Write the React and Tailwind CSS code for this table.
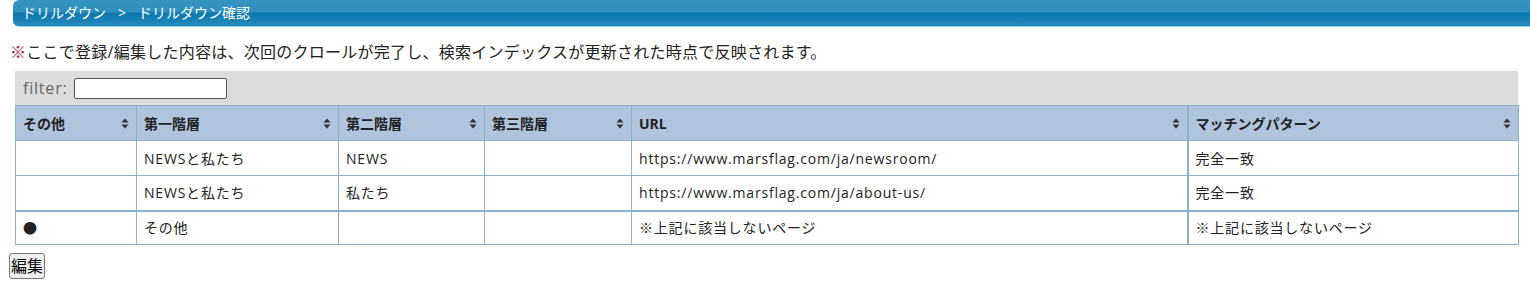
import React from 'react';

const cols = [
    { label: 'その他', w: 'w-[121px]' },
    { label: '第一階層', w: 'w-[202px]' },
    { label: '第二階層', w: 'w-[146px]' },
    { label: '第三階層', w: 'w-[147px]' },
    { label: 'URL', w: 'w-[556px]' },
    { label: 'マッチングパターン', w: 'w-[331px]' },
];

const rows = [
    ['', 'NEWSと私たち', 'NEWS', '', 'https://www.marsflag.com/ja/newsroom/', '完全一致'],
    ['', 'NEWSと私たち', '私たち', '', 'https://www.marsflag.com/ja/about-us/', '完全一致'],
];

const SortIcon = () => (
    <svg className="w-[8px] h-[11px] text-[#333]" viewBox="0 0 8 11" fill="currentColor">
        <path d="M4 0.5L7.5 4.5H0.5Z" />
        <path d="M4 10.5L7.5 6.5H0.5Z" />
    </svg>
);

const App = () => {
    return (
        <div className="w-[1530px] h-[292px] bg-white text-[#222] font-['Open_Sans','Noto_Sans_CJK_JP',sans-serif]">
            {/* Breadcrumb bar */}
            <div className="ml-[13px] h-[27px] rounded-l-[6px] border-b border-[#86d4f2] bg-[linear-gradient(to_bottom,#3594c2_0%,#2f8fbe_46%,#0a78ad_50%,#1b82b6_80%,#2a8dbf_100%)] text-white text-[14px] leading-[25px] pl-[9px] flex gap-[12px]">
                <span>ドリルダウン</span>
                <span>&gt;</span>
                <span>ドリルダウン確認</span>
            </div>

            {/* Notice */}
            <p className="mt-[14px] ml-[10px] text-[16px] leading-[22px] tracking-[0.25px]">
                <span className="text-[#a8123a]">※</span>ここで登録/編集した内容は、次回のクロールが完了し、検索インデックスが更新された時点で反映されます。
            </p>

            <div className="ml-[15px] mt-[8px] w-[1503px]">
                {/* Filter */}
                <div className="h-[34px] bg-[#dcdcdc] flex items-center pl-[8px] gap-[6px]">
                    <span className="text-[16px] text-[#666] tracking-[0.8px]">filter:</span>
                    <input type="text" className="w-[153px] h-[21px] bg-white border border-[#555] rounded-[2px] outline-none" />
                </div>

                {/* Table */}
                <table className="w-full border-collapse table-fixed text-[14px]">
                    <thead>
                        <tr className="bg-[#b0c4de] h-[35px]">
                            {cols.map((c, i) => (
                                <th key={i} className={`${c.w} border border-[#8cafcc] ${i === 4 ? 'border-r-2' : ''} px-[7px] text-left font-bold`}>
                                    <div className="flex items-center justify-between">
                                        <span>{c.label}</span>
                                        <SortIcon />
                                    </div>
                                </th>
                            ))}
                        </tr>
                    </thead>
                    <tbody className="tracking-[0.8px]">
                        {rows.map((r, ri) => (
                            <tr key={ri} className="h-[35px]">
                                {r.map((v, i) => (
                                    <td key={i} className={`border border-[#8cafcc] ${i === 4 ? 'border-r-2' : ''} px-[7px] font-normal`}>{v}</td>
                                ))}
                            </tr>
                        ))}
                    </tbody>
                    <tbody className="border-t-2 border-[#8cafcc] tracking-[0.8px]">
                        <tr className="h-[34px]">
                            <td className="border border-[#8cafcc] px-[7px] text-[14px]">●</td>
                            <td className="border border-[#8cafcc] px-[7px]">その他</td>
                            <td className="border border-[#8cafcc] px-[7px]"></td>
                            <td className="border border-[#8cafcc] px-[7px]"></td>
                            <td className="border border-[#8cafcc] border-r-2 px-[7px]">※上記に該当しないページ</td>
                            <td className="border border-[#8cafcc] px-[7px]">※上記に該当しないページ</td>
                        </tr>
                    </tbody>
                </table>
            </div>

            <button className="mt-[8px] ml-[9px] px-[1px] h-[26px] text-[16px] leading-none bg-[#efefef] border border-[#767676] rounded-[3px] text-black">
                編集
            </button>
        </div>
    );
};

export default App;
